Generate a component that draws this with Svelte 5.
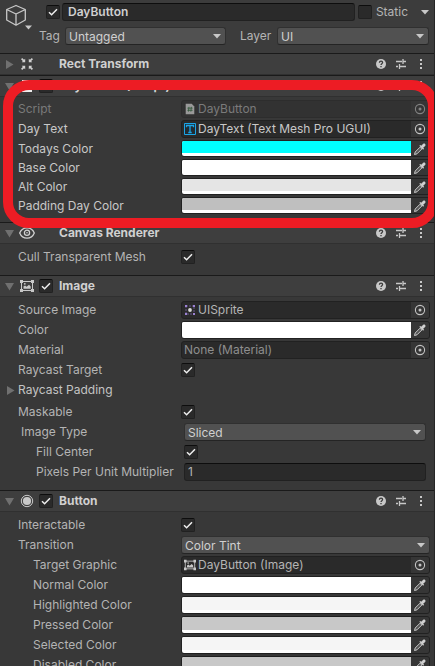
<script>
  const scriptRows = [
    { label: 'Script', kind: 'object', icon: 'script', value: 'DayButton', disabled: true },
    { label: 'Day Text', kind: 'object', icon: 'text', value: 'DayText (Text Mesh Pro UGUI)' },
    { label: 'Todays Color', kind: 'color', value: '#00ffff' },
    { label: 'Base Color', kind: 'color', value: '#ffffff' },
    { label: 'Alt Color', kind: 'color', value: '#e5e5e5' },
    { label: 'Padding Day Color', kind: 'color', value: '#bfbfbf' }
  ];
  const canvasRows = [{ label: 'Cull Transparent Mesh', kind: 'check' }];
  const imageRows = [
    { label: 'Source Image', kind: 'object', icon: 'sprite', value: 'UISprite' },
    { label: 'Color', kind: 'color', value: '#ffffff' },
    { label: 'Material', kind: 'object', value: 'None (Material)', empty: true },
    { label: 'Raycast Target', kind: 'check' },
    { label: 'Raycast Padding', kind: 'foldout' },
    { label: 'Maskable', kind: 'check' },
    { label: 'Image Type', kind: 'select', value: 'Sliced', options: ['Simple', 'Sliced', 'Tiled', 'Filled'], level: 'inset' },
    { label: 'Fill Center', kind: 'check', level: 'inset deep' },
    { label: 'Pixels Per Unit Multiplier', kind: 'number', value: '1', level: 'inset deep' }
  ];
  const buttonRows = [
    { label: 'Interactable', kind: 'check' },
    { label: 'Transition', kind: 'select', value: 'Color Tint', options: ['None', 'Color Tint', 'Sprite Swap', 'Animation'] },
    { label: 'Target Graphic', kind: 'object', icon: 'image', value: 'DayButton (Image)', level: 'nested' },
    { label: 'Normal Color', kind: 'color', value: '#ffffff', level: 'nested' },
    { label: 'Highlighted Color', kind: 'color', value: '#f5f5f5', level: 'nested' },
    { label: 'Pressed Color', kind: 'color', value: '#c8c8c8', level: 'nested' },
    { label: 'Selected Color', kind: 'color', value: '#f5f5f5', level: 'nested' },
    { label: 'Disabled Color', kind: 'color', value: '#c8c8c8', level: 'nested' }
  ];
  const components = [
    { id: 'rect', title: 'Rect Transform', icon: 'rect', rows: [] },
    { id: 'script', title: 'Day Button (Script)', icon: 'script', toggle: true, on: false, rows: scriptRows, marked: true },
    { id: 'canvas', title: 'Canvas Renderer', icon: 'eye', rows: canvasRows },
    { id: 'image', title: 'Image', icon: 'image', toggle: true, on: true, rows: imageRows },
    { id: 'button', title: 'Button', icon: 'radio', toggle: true, on: true, rows: buttonRows }
  ];
</script>

{#snippet caret()}
  <svg class="caret" width="8" height="5" viewBox="0 0 8 5" aria-hidden="true"><path d="M0 0h8L4 4.6z" fill="#c8c8c8" /></svg>
{/snippet}

{#snippet fold(open)}
  <svg width="9" height="9" viewBox="0 0 9 9" aria-hidden="true">
    <path d={open ? 'M0 1h9L4.5 8.5z' : 'M1 0v9l7.500-4.500z'} fill="#707070" />
  </svg>
{/snippet}

{#snippet glyph(name)}
  {#if name === 'rect'}
    <svg width="14" height="14" viewBox="0 0 14 14" aria-hidden="true">
      <path d="M1 2.200 2.200 1 4 2.800 5.200 1.800V5.200H1.800L2.800 4zM13 2.200 11.800 1 10 2.800 8.800 1.800V5.200h3.400L11.200 4zM1 11.800 2.200 13 4 11.200l1.200 1V8.800H1.800l1 1.200zM13 11.800 11.800 13 10 11.200l-1.200 1V8.800h3.400l-1 1.200z" fill="#d0d0d0" />
    </svg>
  {:else if name === 'script'}
    <svg width="12" height="14" viewBox="0 0 12 14" aria-hidden="true">
      <path d="M1 1h7l3 3v9H1z" fill="#eee" />
      <path d="M4.800 4.500 4.200 10M7.600 4.500 7 10M3 6h6M3 8.500h6" stroke="#3f7d4c" stroke-width="1.100" fill="none" />
    </svg>
  {:else if name === 'eye'}
    <svg width="16" height="14" viewBox="0 0 16 14" aria-hidden="true">
      <path d="M.7 7C3.500 .2 12.500 .2 15.300 7 12.500 13.800 3.500 13.800 .7 7z" fill="none" stroke="#d0d0d0" stroke-width="1.300" />
      <circle cx="8" cy="6.800" r="2.600" fill="none" stroke="#d0d0d0" stroke-width="1.300" /><circle cx="8" cy="6.800" r=".8" fill="#d0d0d0" />
    </svg>
  {:else if name === 'image'}
    <svg width="14" height="12" viewBox="0 0 14 12" aria-hidden="true">
      <path d="M1.500 1.500h11v9h-11z" fill="none" stroke="#c8c8c8" />
      <path d="M0 0h3v3H0zM11 0h3v3h-3zM0 9h3v3H0zM11 9h3v3h-3zM3.500 8.800V6.500L5 5.400l1.600 1.400L9 4.800l1.700 1.700v2.300z" fill="#c8c8c8" />
      <circle cx="4.800" cy="3.800" r=".9" fill="#c8c8c8" />
    </svg>
  {:else if name === 'radio'}
    <svg width="14" height="14" viewBox="0 0 14 14" aria-hidden="true">
      <circle cx="7" cy="7" r="5.700" fill="none" stroke="#c8c8c8" /><circle cx="7" cy="7" r="4.100" fill="#c8c8c8" />
    </svg>
  {:else if name === 'text'}
    <svg width="12" height="12" viewBox="0 0 12 12" aria-hidden="true">
      <path d="M.5 .5h11v11H.5z" fill="#202c33" stroke="#1ba5e8" />
      <path d="M2.500 4.300V2.500h7v1.800M6 2.800v6.700M4.300 9.500h3.400" fill="none" stroke="#1ba5e8" stroke-width="1.300" />
    </svg>
  {:else if name === 'sprite'}
    <svg width="12" height="12" viewBox="0 0 12 12" aria-hidden="true">
      <path d="M2 2h8v8H2z" fill="none" stroke="#655789" stroke-dasharray="2 1" />
      <path d="M1 1h2v2H1zM9 1h2v2H9zM1 9h2v2H1zM9 9h2v2H9z" fill="#9b82d2" /><circle cx="6" cy="6" r="1.900" fill="#d8d8d8" />
    </svg>
  {/if}
{/snippet}

{#snippet row(id, r, i)}
  {@const key = `${id}-${i}`}
  <div class="row {r.kind} {r.level ?? ''}" class:disabled={r.disabled}>
    {#if r.kind === 'foldout'}
      <button class="plain foldrow" aria-expanded="false">{@render fold(false)}{r.label}</button>
    {:else}
      <label class="name" for={key}>{r.label}</label>
      {#if r.kind === 'check'}
        <input id={key} type="checkbox" checked />
      {:else if r.kind === 'number'}
        <input id={key} class="box" type="text" inputmode="decimal" value={r.value} />
      {:else if r.kind === 'select'}
        <span class="drop">
          <select id={key} value={r.value}>
            {#each r.options as o}<option>{o}</option>{/each}
          </select>
          {@render caret()}
        </span>
      {:else if r.kind === 'color'}
        <span class="box split">
          <input id={key} type="color" value={r.value} />
          <button class="plain end" aria-label="Pick {r.label}">
            <svg width="12" height="12" viewBox="0 0 12 12" aria-hidden="true">
              <path d="M.5 11.500 1.200 9 6 4.200 7.800 6 3 10.800z" fill="#555" stroke="#c8c8c8" />
              <path d="M5.300 2.800 6.300 1.900l.9.900L9 .9C10.500-.4 12.400 1.500 11.100 3L9.200 4.800l.9.900-1 1z" fill="#d0d0d0" />
            </svg>
          </button>
        </span>
      {:else}
        <span class="box split">
          {#if r.icon}<span class="mini">{@render glyph(r.icon)}</span>{/if}
          <input id={key} class="ref" class:empty={r.empty} type="text" readonly value={r.value} />
          <button class="plain end" aria-label="Select {r.label}">
            <svg width="12" height="12" viewBox="0 0 12 12" aria-hidden="true">
              <circle cx="6" cy="6" r="4.600" fill="none" stroke="#c4c4c4" stroke-width="1.100" /><circle cx="6" cy="6" r="1.500" fill="#c4c4c4" />
            </svg>
          </button>
        </span>
      {/if}
    {/if}
  </div>
{/snippet}

<main>
  <header class="top">
    <button class="plain cube" aria-label="Object icon">
      <svg width="26" height="26" viewBox="0 0 26 26" aria-hidden="true">
        <path d="M10 1.500 19.300 5.500v10.500L10 21.200 .7 16v-10.500zM.7 5.500 10 10l9.300-4.500M10 10v11.200" fill="none" stroke="#c8c8c8" stroke-width="1.300" stroke-linejoin="round" />
        <path d="M19 21.500h7l-3.500 4z" fill="#c8c8c8" />
      </svg>
    </button>
    <div class="lines">
      <div class="line">
        <input class="active" type="checkbox" checked aria-label="Active" />
        <input class="box title" type="text" value="DayButton" aria-label="Name" />
        <input id="static" type="checkbox" />
        <label for="static">Static</label>
        <button class="plain more" aria-label="Static options">{@render caret()}</button>
      </div>
      <div class="line second">
        <label for="tag">Tag</label>
        <span class="drop tag"><select id="tag"><option>Untagged</option></select>{@render caret()}</span>
        <label class="layer" for="layer">Layer</label>
        <span class="drop layers"><select id="layer"><option>UI</option></select>{@render caret()}</span>
      </div>
    </div>
  </header>

  {#each components as c}
    <section class:marked={c.marked}>
      <div class="head">
        <button class="plain toggle" aria-label="Fold {c.title}" aria-expanded={c.rows.length > 0}>{@render fold(c.rows.length > 0)}</button>
        <span class="symbol">{@render glyph(c.icon)}</span>
        <span class="enable">
          {#if c.toggle}<input type="checkbox" checked={c.on} aria-label="Enable {c.title}" />{/if}
        </span>
        <h2>{c.title}</h2>
        <button class="plain tool" aria-label="Help">
          <svg width="12" height="12" viewBox="0 0 12 12" aria-hidden="true">
            <circle cx="6" cy="6" r="5" fill="#c8c8c8" />
            <path d="M4.400 4.700C4.500 2.600 7.600 2.700 7.600 4.600 7.600 5.700 6 5.700 6 7M6 8v1.300" fill="none" stroke="#3a3a3a" stroke-width="1.300" />
          </svg>
        </button>
        <button class="plain tool" aria-label="Presets">
          <svg width="12" height="12" viewBox="0 0 12 12" aria-hidden="true">
            <path d="M1 3.500h6M8 3.500h3M8 1v5M1 8.500h2M4.500 8.500H11M4.500 6v5" fill="none" stroke="#c8c8c8" stroke-width="1.300" />
          </svg>
        </button>
        <button class="plain tool" aria-label="More">
          <svg width="12" height="12" viewBox="0 0 12 12" aria-hidden="true">
            <path d="M5 1h2v2H5zM5 5h2v2H5zM5 9h2v2H5z" fill="#c8c8c8" />
          </svg>
        </button>
      </div>
      {#if c.rows.length}
        <div class="rows">
          {#each c.rows as r, i}{@render row(c.id, r, i)}{/each}
        </div>
      {/if}
    </section>
  {/each}
</main>

<style>
  :global(body) { background: #383838; }
  main {
    height: 100vh;
    overflow: hidden;
    box-sizing: border-box;
    border-right: 1px solid #262626;
    background: #383838;
    color: #b4b4b4;
    font: 12px/18px Inter, "Liberation Sans", sans-serif;
  }
  main :is(input, select, button) {
    box-sizing: border-box;
    margin: 0;
    font: inherit;
    color: inherit;
    min-width: 0;
  }
  svg { display: block; flex: none; }
  main .plain { display: flex; align-items: center; justify-content: center; padding: 0; border: 0; background: none; }

  .top { display: flex; background: #3c3c3c; padding: 3px 5px 8px 6px; }
  main .cube { align-items: flex-start; justify-content: flex-start; height: 28px; width: 27px; padding-top: 1px; }
  .lines { flex: 1; min-width: 0; display: flex; flex-direction: column; gap: 6px; }
  .line { display: flex; align-items: center; height: 18px; }
  main .active { margin-left: 13px; }
  main .title { flex: 1; margin: 0 3px 0 2px; padding: 0 5px; font-weight: 600; color: #d0d0d0; }
  .line label { margin-left: 4px; }
  main .more { width: 15px; height: 18px; margin-left: 6px; justify-content: flex-end; }
  .line.second label { margin-left: 6px; width: 26px; }
  .line.second .layer { margin-left: 14px; width: 37px; }
  .tag { flex: 161; }
  .layers { flex: 152; }

  .drop { display: grid; align-items: center; min-width: 0; }
  .drop > * { grid-area: 1 / 1; }
  select {
    appearance: none;
    width: 100%;
    height: 18px;
    padding: 0 18px 0 3px;
    border: 1px solid #303030;
    border-bottom-color: #242424;
    border-radius: 3px;
    background: #515151;
  }
  main select { color: #d0d0d0; }
  .caret { justify-self: end; pointer-events: none; }
  .drop .caret { margin-right: 5px; }

  .box { height: 18px; border: 1px solid #212121; border-radius: 3px; background: #2a2a2a; box-sizing: border-box; padding: 0 3px; }
  input.box { border-top-color: #0d0d0d; }
  input[type='checkbox'] {
    appearance: none;
    flex: none;
    width: 14px;
    height: 14px;
    border: 1px solid #212121;
    border-top-color: #0d0d0d;
    border-radius: 2px;
    background: #2a2a2a;
  }
  input[type='checkbox']:checked {
    background: #2a2a2a url("data:image/svg+xml,%3Csvg xmlns='http://www.w3.org/2000/svg' viewBox='0 0 12 12'%3E%3Cpath d='M2 6.300 4.600 8.800 10 3.300' fill='none' stroke='%23eee' stroke-width='1.500'/%3E%3C/svg%3E") center / 12px 12px;
  }

  section { position: relative; }
  .head {
    display: flex;
    align-items: center;
    height: 22px;
    box-sizing: border-box;
    padding-right: 3px;
    border-top: 1px solid #1a1a1a;
    border-bottom: 1px solid #303030;
    background: #3e3e3e;
  }
  .toggle { width: 19px; height: 20px; }
  .symbol { width: 16px; display: flex; justify-content: center; }
  .enable { width: 20px; padding-left: 4px; display: flex; }
  h2 { flex: 1; margin: 0; font-size: 12px; line-height: 18px; font-weight: 700; color: #d0d0d0; }
  .tool { width: 20px; height: 20px; }

  .rows { padding: 3px 4px 8px 0; }
  .row { display: grid; grid-template-columns: 181px minmax(0, 1fr); align-items: center; height: 20px; }
  .name { padding-left: 18px; white-space: nowrap; }
  .nested .name { padding-left: 33px; }
  .inset { grid-template-columns: 184px minmax(0, 1fr); padding-right: 4px; }
  .inset .name { padding-left: 21px; }
  .deep .name { padding-left: 36px; }
  main .foldrow { gap: 3px; padding-left: 6px; justify-self: start; }
  .foldout { margin-bottom: 2px; color: #c4c4c4; }

  .split { display: flex; align-items: stretch; padding: 0; overflow: hidden; }
  main .end { width: 18px; background: #363636; flex: none; }
  .mini { display: flex; align-items: center; justify-content: center; width: 12px; margin-left: 2px; }
  .mini svg { width: 12px; height: 12px; }
  .ref { flex: 1; border: 0; padding: 0 2px; background: none; outline: 0; height: 16px; }
  main .ref.empty { color: #8e8e8e; }
  input[type='color'] { appearance: none; flex: 1; height: auto; border: 0; padding: 0 0 3px; background: #fff; }
  input[type='color']::-webkit-color-swatch-wrapper { padding: 0; }
  input[type='color']::-webkit-color-swatch { border: 0; border-radius: 0; }

  .marked .rows { padding: 2px 4px 7px 0; color: #c8c8c8; }
  .marked .color { height: 19px; }
  .marked .color .box { height: 17px; }
  .marked .disabled { color: #7a7a7a; }
  .disabled .box { background: #323232; border-color: #2d2d2d; }
  .disabled svg { opacity: 0.55; }
  .marked::after {
    content: '';
    position: absolute;
    z-index: 1;
    inset: 5px -4px -6px 3px;
    border: 10px solid #ed1c24;
    border-radius: 26px;
    pointer-events: none;
  }
</style>
